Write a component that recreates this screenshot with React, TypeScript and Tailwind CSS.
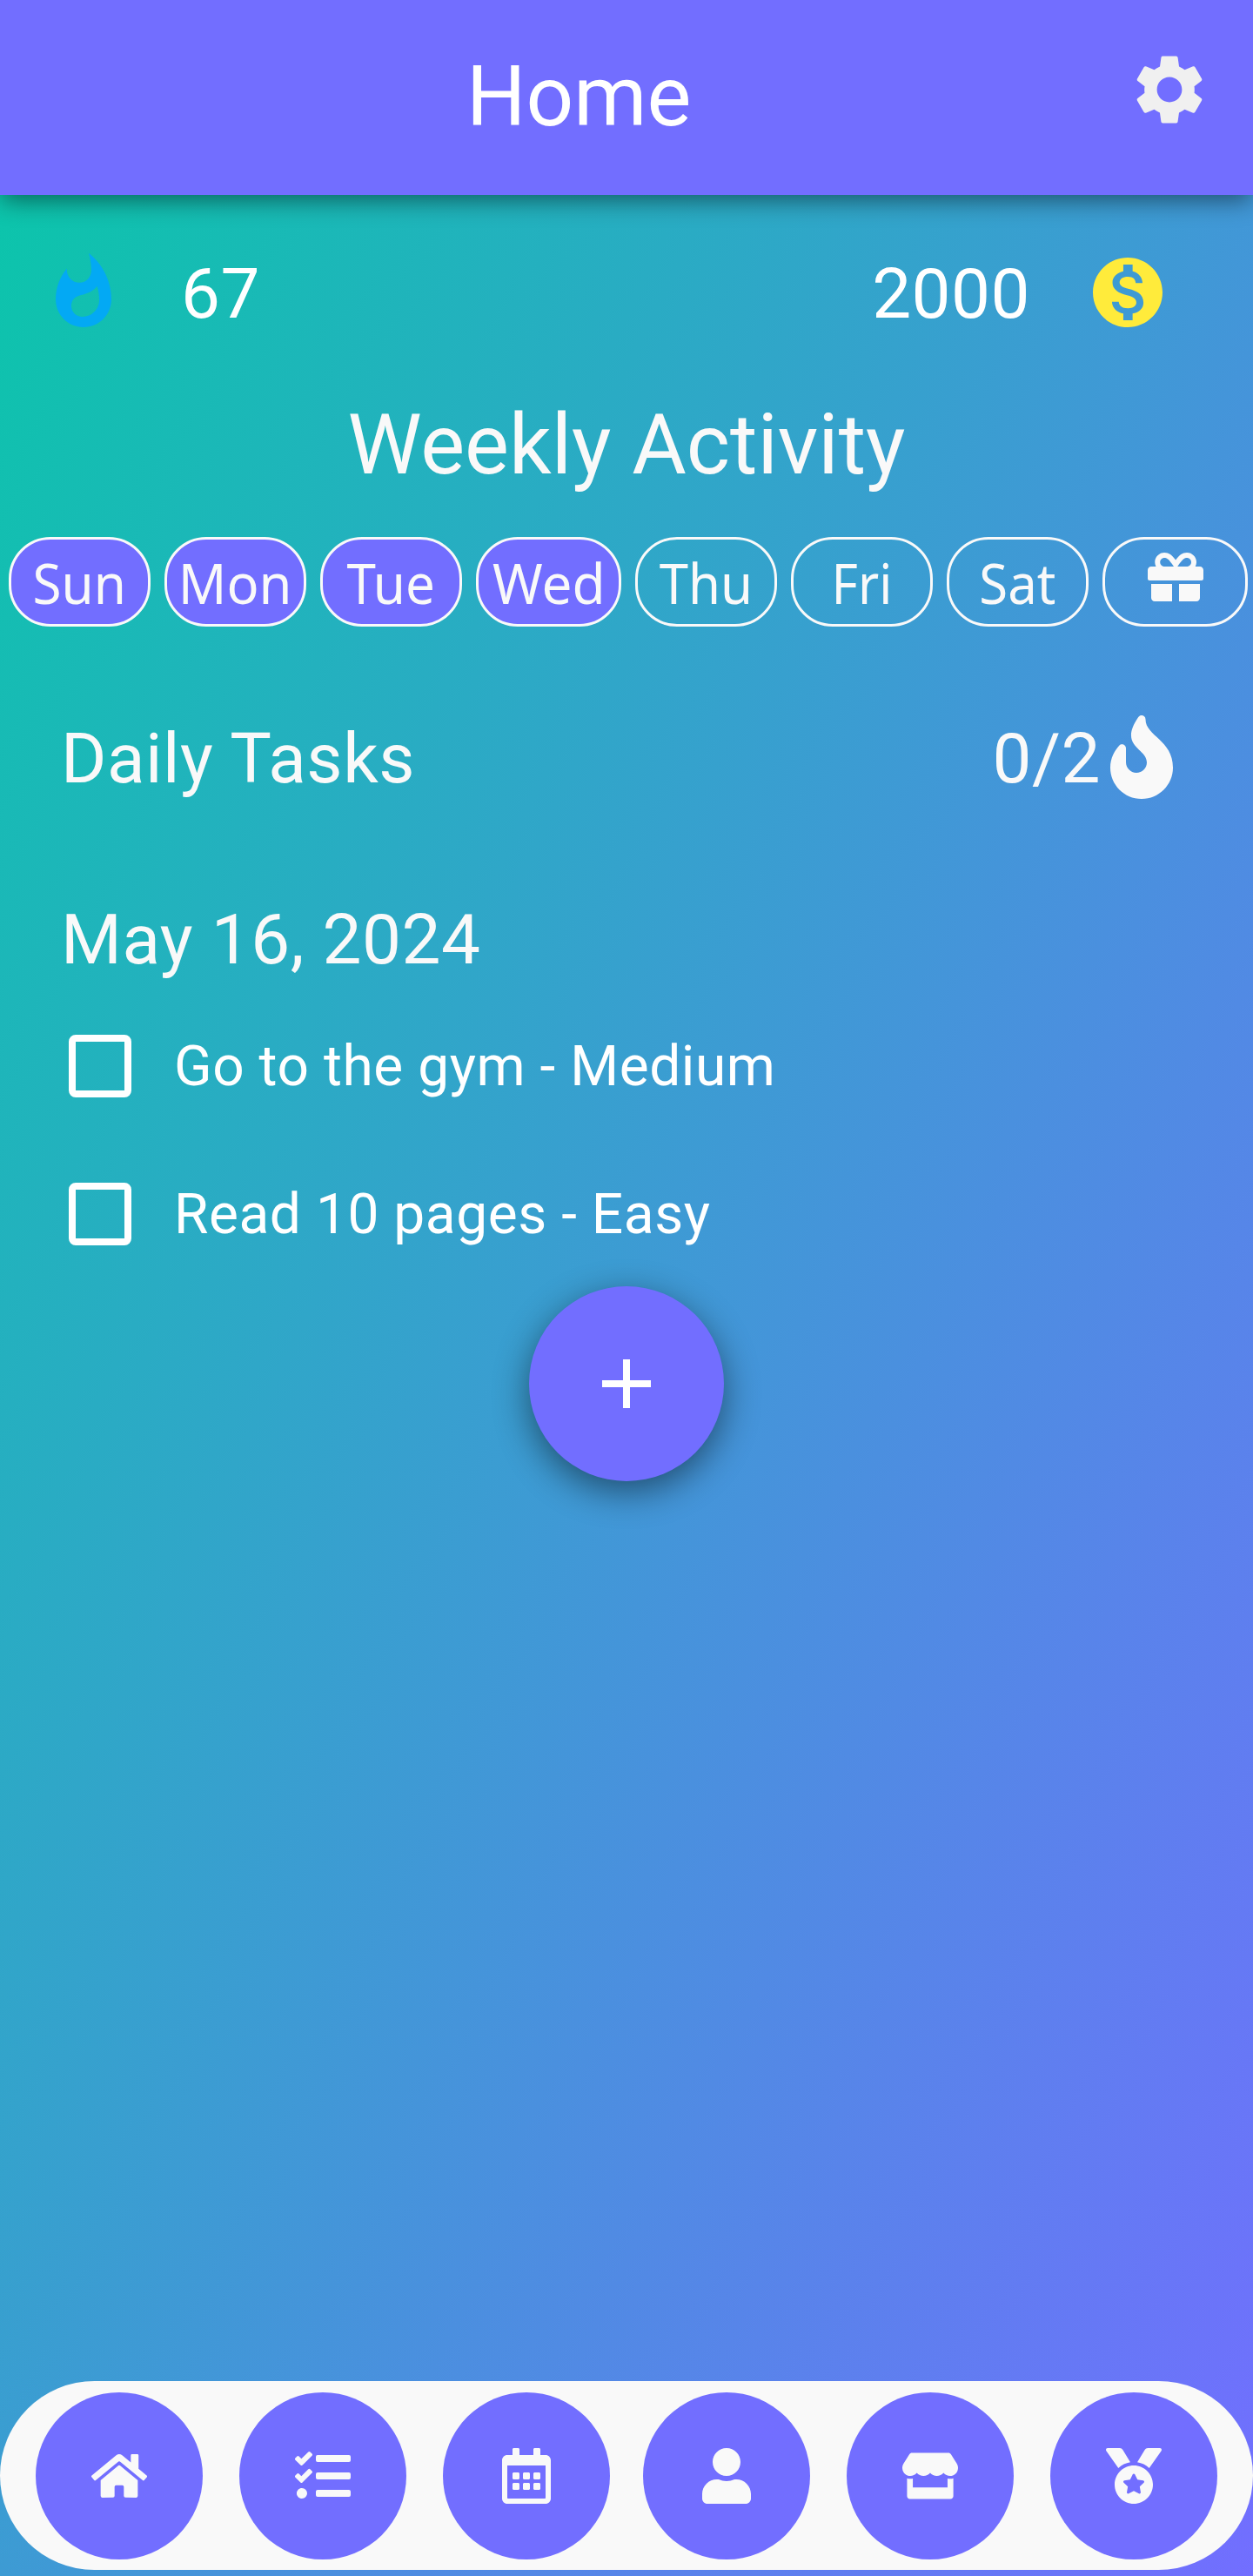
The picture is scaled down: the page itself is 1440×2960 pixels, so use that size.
import React from "react";
import { FaFire, FaGift, FaHome, FaTasks, FaRegCalendarAlt, FaUser, FaStore, FaMedal } from "react-icons/fa";
import { MdSettings, MdWhatshot, MdMonetizationOn } from "react-icons/md";

const days = [
  { name: "Sun", fit: "scale-x-[0.955]" },
  { name: "Mon", fit: "scale-x-[0.975]" },
  { name: "Tue", fit: "scale-x-[0.955]" },
  { name: "Wed", fit: "scale-x-[0.985]" },
  { name: "Thu", fit: "scale-x-[0.95]" },
  { name: "Fri", fit: "scale-x-[0.93]" },
  { name: "Sat", fit: "scale-x-[0.95]" },
];
const tasks = ["Go to the gym - Medium", "Read 10 pages - Easy"];
const tabGroups = [
  [FaHome, FaTasks, FaRegCalendarAlt],
  [FaUser, FaStore, FaMedal],
];

function DayPill({ children, active, wide }: { children: React.ReactNode; active?: boolean; wide?: boolean }) {
  return (
    <div
      className={`flex h-[103px] items-center justify-center rounded-[48px] border-[3px] border-[#f9f9f9] ${
        active ? "bg-[#726eff]" : ""
      } ${wide ? "w-[167px]" : "w-[163px]"}`}
    >
      {children}
    </div>
  );
}

export default function App() {
  return (
    <div className="flex h-[2960px] w-[1440px] flex-col overflow-hidden bg-[linear-gradient(to_bottom_right,#08c8a8,#726eff)] font-['Roboto',sans-serif] text-[#f9f9f9]">
      <header className="flex h-[224px] shrink-0 items-center justify-between bg-[#726eff] pl-[536px] pr-[48px] text-white shadow-[0_8px_26px_-2px_rgba(0,0,0,0.48)]">
        <h1 className="mb-[2px] text-[96px] leading-[112px]">Home</h1>
        <MdSettings className="mb-[19px] size-[96px] text-[#f0f0f0]" />
      </header>

      <div className="mt-[64px] flex h-[96px] shrink-0 items-center justify-between pl-[48px] pr-[96px] text-[80px] tracking-[0.5px] text-white">
        <div className="flex items-center gap-[64px]">
          <MdWhatshot className="size-[96px] text-[#03a9f4]" />
          <span className="pt-[4px]">67</span>
        </div>
        <div className="flex items-center gap-[64px]">
          <span className="pt-[4px]">2000</span>
          <MdMonetizationOn className="size-[96px] text-[#ffeb3b]" />
        </div>
      </div>

      <h2 className="mt-[71px] shrink-0 text-center text-[96px] leading-[112px]">Weekly Activity</h2>

      <div className="mt-[50px] flex shrink-0 gap-[16px] pl-[10px] font-['Noto_Sans',sans-serif] text-[63px]">
        {days.map(({ name, fit }, i) => (
          <DayPill key={name} active={i < 4} wide={i === 3}>
            <span className={`pt-[3px] ${fit}`}>{name}</span>
          </DayPill>
        ))}
        <DayPill wide>
          <FaGift className="mb-[12px] size-[64px]" />
        </DayPill>
      </div>

      <section className="flex flex-col pl-[70px] pr-[92px] pt-[101px] tracking-[0.55px]">
        <div className="flex h-[98px] items-center justify-between text-[80px]">
          <span className="pt-[4px]">Daily Tasks</span>
          <div className="flex items-center gap-[11px]">
            <span className="pt-[4px]">0/2</span>
            <FaFire className="h-[96px] w-[72px]" />
          </div>
        </div>
        <h3 className="mt-[114px] text-[80px] leading-[94px]">May 16, 2024</h3>
        <div className="mt-[13px] flex flex-col">
          {tasks.map((task) => (
            <label key={task} className="flex h-[170px] items-center gap-[49px] pl-[9px] text-[64px] text-white">
              <span className="size-[72px] rounded-[8px] border-[8px] border-white" />
              <span className="pt-[2px]">{task}</span>
            </label>
          ))}
        </div>
      </section>

      <button className="mt-[-2px] flex size-[224px] shrink-0 items-center justify-center self-center rounded-full bg-[#726eff] text-white shadow-[0_12px_40px_rgba(0,0,0,0.48)]">
        <svg viewBox="0 0 56 56" className="size-[56px]" fill="currentColor">
          <path d="M24 0h8v24h24v8H32v24h-8V32H0v-8h24z" />
        </svg>
      </button>

      <nav className="mb-[7px] mt-auto flex h-[217px] shrink-0 items-center justify-between rounded-full bg-[#f9f9f9] px-[41px]">
        {tabGroups.map((group, g) => (
          <div key={g} className="flex gap-[42px]">
            {group.map((Icon, i) => (
              <button key={i} className="flex size-[192px] items-center justify-center rounded-full bg-[#726eff]">
                <Icon className="size-[64px]" />
              </button>
            ))}
          </div>
        ))}
      </nav>
    </div>
  );
}
